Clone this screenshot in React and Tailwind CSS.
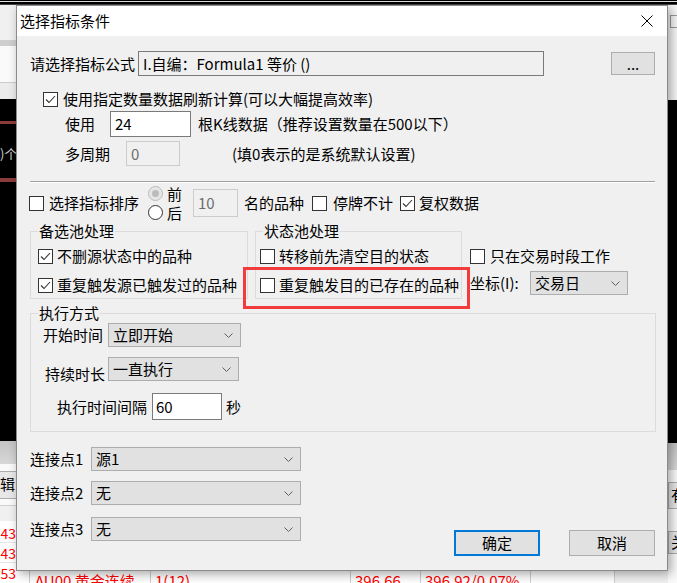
import clsx from 'clsx';

function Check({ checked }) {
  return (
    <span className="w-[15px] h-[15px] shrink-0 border border-[#333333] bg-white flex items-center justify-center">
      {checked && (
        <svg width="13" height="13" viewBox="0 0 13 13">
          <path d="M2 6.5 L5 9.5 L11 3" fill="none" stroke="#333333" strokeWidth="1.1" />
        </svg>
      )}
    </span>
  );
}

function Radio({ checked, disabled }) {
  return (
    <span
      className={clsx(
        'w-[15px] h-[15px] shrink-0 rounded-full border flex items-center justify-center',
        disabled ? 'border-[#bcbcbc] bg-[#e6e6e6]' : 'border-[#333333] bg-white'
      )}
    >
      {checked && <span className="w-[7px] h-[7px] rounded-full bg-[#bcbcbc]" />}
    </span>
  );
}

function Chevron() {
  return (
    <svg width="9" height="5" viewBox="0 0 9 5" className="shrink-0">
      <path d="M0.5 0.5 L4.5 4.5 L8.5 0.5" fill="none" stroke="#606060" />
    </svg>
  );
}

function Select({ className, children }) {
  return (
    <div className={clsx('flex items-center justify-between border border-[#adadad] bg-[#e1e1e1] pl-[4px] pr-[7px]', className)}>
      <span>{children}</span>
      <Chevron />
    </div>
  );
}

function Group({ title, className, children }) {
  return (
    <div className={clsx('border border-[#dcdcdc] flex flex-col shrink-0', className)}>
      <span className="-mt-[9px] ml-[7px] w-fit px-[1px] bg-[#f0f0f0] h-[16px] leading-[16px]">{title}</span>
      {children}
    </div>
  );
}

function CheckRow({ checked, label, className }) {
  return (
    <div className={clsx('h-[20px] flex items-center gap-[4px]', className)}>
      <Check checked={checked} />
      <span>{label}</span>
    </div>
  );
}

function Button({ primary, children }) {
  return (
    <div
      className={clsx(
        'w-[86px] h-[26px] bg-[#e1e1e1] flex items-center justify-center',
        primary ? 'border-2 border-[#0078d7]' : 'border border-[#adadad]'
      )}
    >
      {children}
    </div>
  );
}

function Dialog() {
  return (
    <div className="absolute left-[16px] top-[5px] w-[652px] h-[566px] border border-[#8a8a8a] bg-[#f0f0f0] flex flex-col shadow-[3px_3px_10px_rgba(0,0,0,0.35)] text-black">
      <div className="h-[30px] bg-white flex items-center justify-between pl-[3px] pr-[14px] shrink-0">
        <span>选择指标条件</span>
        <svg width="12" height="12" viewBox="0 0 12 12">
          <path d="M0.5 0.5 L11.5 11.5 M11.5 0.5 L0.5 11.5" stroke="#000" strokeWidth="1" />
        </svg>
      </div>

      <div className="flex flex-col leading-[20px]">
        <div className="mt-[15px] h-[25px] flex items-center pl-[13px]">
          <span className="w-[108px]">请选择指标公式</span>
          <div className="w-[406px] h-[25px] border border-[#7a7a7a] bg-[#f0f0f0] pl-[4px] flex items-center">
            I.自编：Formula1 等价 ()
          </div>
          <div className="ml-[67px] w-[44px] h-[23px] border border-[#adadad] bg-[#e1e1e1] flex items-center justify-center">...</div>
        </div>

        <div className="mt-[13px] h-[20px] flex items-center pl-[26px] gap-[5px]">
          <Check checked />
          <span>使用指定数量数据刷新计算(可以大幅提高效率)</span>
        </div>

        <div className="mt-[2px] h-[26px] flex items-center pl-[48px]">
          <span className="w-[45px]">使用</span>
          <div className="w-[81px] h-[26px] border border-[#7a7a7a] bg-white pl-[4px] flex items-center">24</div>
          <span className="ml-[7px]">根K线数据（推荐设置数量在500以下）</span>
        </div>

        <div className="mt-[4px] h-[25px] flex items-center pl-[48px]">
          <span className="w-[61px]">多周期</span>
          <div className="w-[54px] h-[25px] border border-[#cccccc] bg-[#f0f0f0] text-[#6d6d6d] pl-[4px] flex items-center">0</div>
          <span className="ml-[52px]">(填0表示的是系统默认设置)</span>
        </div>

        <div className="mt-[15px] ml-[13px] w-[625px] h-[2px] border-t border-[#a0a0a0] border-b border-b-white" />

        <div className="mt-[3px] h-[34px] flex items-center pl-[12px]">
          <Check />
          <span className="ml-[5px]">选择指标排序</span>
          <div className="ml-[9px] h-[34px] flex flex-col justify-between">
            <div className="h-[15px] flex items-center gap-[4px]">
              <Radio checked disabled />
              <span className="leading-[15px]">前</span>
            </div>
            <div className="h-[15px] flex items-center gap-[4px]">
              <Radio />
              <span className="leading-[15px]">后</span>
            </div>
          </div>
          <div className="ml-[11px] w-[45px] h-[28px] border border-[#cccccc] bg-[#f0f0f0] text-[#6d6d6d] pl-[4px] flex items-center">10</div>
          <span className="ml-[6px]">名的品种</span>
          <span className="ml-[8px]"><Check /></span>
          <span className="ml-[6px]">停牌不计</span>
          <span className="ml-[7px]"><Check checked /></span>
          <span className="ml-[4px]">复权数据</span>
        </div>

        <div className="mt-[11px] flex items-start pl-[13px]">
          <Group title="备选池处理" className="w-[218px] h-[68px]">
            <CheckRow checked label="不删源状态中的品种" className="mt-[7px] pl-[7px]" />
            <CheckRow checked label="重复触发源已触发过的品种" className="mt-[9px] pl-[7px]" />
          </Group>
          <Group title="状态池处理" className="ml-[7px] w-[207px] h-[68px]">
            <CheckRow label="转移前先清空目的状态" className="mt-[7px] pl-[4px]" />
            <CheckRow label="重复触发目的已存在的品种" className="mt-[9px] pl-[4px]" />
          </Group>
          <div className="ml-[8px] flex flex-col">
            <div className="mt-[15px] h-[20px] flex items-center gap-[5px]">
              <Check />
              <span>只在交易时段工作</span>
            </div>
            <div className="mt-[5px] h-[24px] flex items-center">
              <span className="w-[60px]">坐标(I):</span>
              <Select className="w-[98px] h-[24px]">交易日</Select>
            </div>
          </div>
        </div>

        <Group title="执行方式" className="mt-[14px] ml-[13px] w-[626px] h-[119px]">
          <div className="mt-[2px] h-[24px] flex items-center pl-[12px]">
            <span className="w-[65px]">开始时间</span>
            <Select className="w-[133px] h-[24px]">立即开始</Select>
          </div>
          <div className="mt-[10px] h-[24px] flex items-start pl-[14px]">
            <span className="w-[63px] mt-[5px] leading-[24px]">持续时长</span>
            <Select className="w-[131px] h-[24px]">一直执行</Select>
          </div>
          <div className="mt-[12px] h-[27px] flex items-center pl-[26px]">
            <span className="w-[95px]">执行时间间隔</span>
            <div className="w-[70px] h-[27px] border border-[#7a7a7a] bg-white pl-[3px] flex items-center">60</div>
            <span className="ml-[4px]">秒</span>
          </div>
        </Group>

        <div className="mt-[15px] h-[24px] flex items-center pl-[13px]">
          <span className="w-[61px]">连接点1</span>
          <Select className="w-[210px] h-[24px]">源1</Select>
        </div>
        <div className="mt-[10px] h-[24px] flex items-center pl-[13px]">
          <span className="w-[61px]">连接点2</span>
          <Select className="w-[210px] h-[24px]">无</Select>
        </div>
        <div className="mt-[12px] flex items-start pl-[13px] pr-[12px]">
          <div className="h-[24px] flex items-center">
            <span className="w-[61px]">连接点3</span>
            <Select className="w-[210px] h-[24px]">无</Select>
          </div>
          <div className="ml-auto mt-[13px] flex gap-[29px]">
            <Button primary>确定</Button>
            <Button>取消</Button>
          </div>
        </div>
      </div>

      <div className="absolute left-[226px] top-[261px] w-[227px] h-[42px] border-[3px] border-[#f23c3c]" />
    </div>
  );
}

function LeftStrip() {
  return (
    <div className="w-[16px] flex flex-col shrink-0 overflow-hidden">
      <div className="h-[35px] bg-[#f0f0f0]" />
      <div className="h-[6px] bg-[#cfcfcf]" />
      <div className="h-[37px] bg-[#fafafa]" />
      <div className="h-[17px] bg-[#ececec] border-t border-[#cccccc]" />
      <div className="h-[345px] bg-black flex flex-col">
        <div className="mt-[22px] h-[3px] bg-[#8c3b3b]" />
        <div className="mt-[22px] h-[16px] leading-[16px] text-[13px] text-[#cfcfcf] whitespace-nowrap">)个</div>
        <div className="mt-[16px] h-[4px] bg-[#8c3b3b]" />
      </div>
      <div className="h-[23px] bg-gradient-to-b from-[#c4c4c4] to-[#d8d8d8]" />
      <div className="h-[42px] bg-[#fafafa] flex flex-col">
        <div className="mt-[7px] h-[28px] border-y border-[#adadad] bg-[#e8e8e8] flex items-center whitespace-nowrap">辑</div>
      </div>
      <div className="h-[16px] bg-[#f0f0f0] border-t border-[#d0d0d0]" />
      <div className="flex flex-col bg-white text-[#ff0000] whitespace-nowrap leading-[20px] text-[14px]">
        <div className="h-[22px] pt-[2px] border-b border-[#e6e6e6] flex justify-end">:43</div>
        <div className="h-[20px] border-b border-[#e6e6e6] flex justify-end">:43</div>
        <div className="h-[20px] flex justify-end">:53</div>
      </div>
    </div>
  );
}

function RightStrip() {
  return (
    <div className="w-[9px] flex flex-col shrink-0 overflow-hidden">
      <div className="h-[95px] bg-[#f7f7f7] flex flex-col">
        <div className="mt-[10px] ml-[2px] w-[14px] h-[13px] border border-[#9a9a9a]" />
      </div>
      <div className="h-[343px] bg-black" />
      <div className="h-[27px] bg-gradient-to-b from-[#c4c4c4] to-[#d8d8d8]" />
      <div className="h-[113px] bg-[#fafafa] flex flex-col whitespace-nowrap">
        <div className="mt-[12px] h-[27px] border-y border-l border-[#adadad] bg-[#e8e8e8] pl-[2px] flex items-center">有</div>
        <div className="mt-[22px] h-[23px] border-y border-l border-[#adadad] bg-[#e8e8e8] pl-[2px] flex items-center">关</div>
      </div>
    </div>
  );
}

function BottomRow() {
  return (
    <div className="h-[12px] bg-white flex text-[#ff0000] whitespace-nowrap leading-[20px] overflow-hidden">
      <div className="w-[13px] shrink-0" />
      <div className="w-[121px] shrink-0 border-l border-[#d0d0d0] pl-[5px]">AU00 黄金连续</div>
      <div className="w-[200px] shrink-0 border-l border-[#d0d0d0] pl-[4px]">1(12)</div>
      <div className="w-[70px] shrink-0 border-l border-[#d0d0d0] pl-[4px]">396.66</div>
      <div className="w-[110px] shrink-0 border-l border-[#d0d0d0] pl-[4px]">396.92/0.07%</div>
      <div className="w-[84px] shrink-0 border-l border-[#d0d0d0]" />
      <div className="flex-1 border-l border-[#d0d0d0] bg-[#f0f0f0]" />
    </div>
  );
}

export default function App() {
  return (
    <div className="relative w-[677px] h-[583px] overflow-hidden bg-black text-[15px] font-[family-name:'Noto_Sans_CJK_SC',sans-serif]">
      <div className="h-[5px] flex flex-col">
        <div className="h-[1px] bg-black" />
        <div className="h-[1px] bg-[#e0e0e0]" />
        <div className="h-[2px] bg-black" />
        <div className="h-[1px] bg-[#444444]" />
      </div>
      <div className="h-[578px] flex">
        <LeftStrip />
        <div className="w-[652px] flex flex-col shrink-0">
          <div className="h-[566px] bg-black" />
          <BottomRow />
        </div>
        <RightStrip />
      </div>
      <Dialog />
    </div>
  );
}
